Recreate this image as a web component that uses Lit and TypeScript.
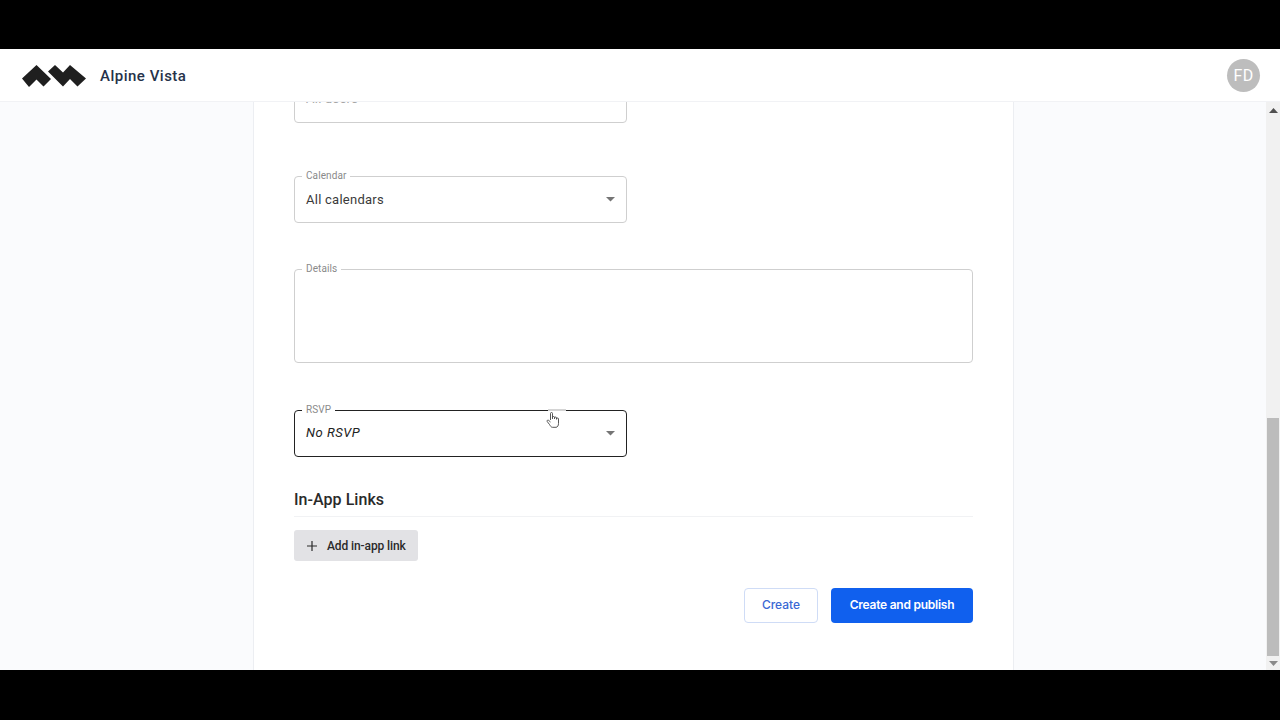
import { LitElement, html, css, svg } from "lit";
import { customElement } from "lit/decorators.js";

const arrow = svg`<svg class="arrow" width="9" height="5" viewBox="0 0 9 5"><path d="M0 0h9L4.500 4.500z" fill="#757575"/></svg>`;

@customElement("app-root")
export class AppRoot extends LitElement {
  static styles = css`
    :host { display: block; width: 1280px; height: 720px; background: #000; font-family: Roboto, "Liberation Sans", sans-serif; overflow: hidden; }
    .page { display: flex; flex-direction: column; height: 720px; }
    .bar-top { height: 49px; flex: none; background: #000; }
    .bar-bottom { height: 50px; flex: none; background: #000; }
    .header { height: 53px; flex: none; box-sizing: border-box; background: #fff; border-bottom: 1px solid #f1f2f5; display: flex; align-items: center; padding: 2px 20px 0 22px; position: relative; z-index: 2; }
    .logo { display: block; margin-top: 0; }
    .brand { margin-left: 14px; font-size: 15px; font-weight: 500; color: #26324a; letter-spacing: 0.5px; flex: 1; }
    .avatar { width: 33px; height: 33px; border-radius: 50%; background: #bdbdbd; color: #fff; font-size: 16px; display: flex; align-items: center; justify-content: center; letter-spacing: 0.3px; margin-top: -2px; }
    .body { flex: 1; min-height: 0; display: flex; background: #fafbfd; overflow: hidden; }
    .main { flex: 1; display: flex; justify-content: flex-start; padding-left: 253px; overflow: hidden; }
    .card { width: 761px; box-sizing: border-box; background: #fff; border-left: 1px solid #eceef2; border-right: 1px solid #eceef2; padding: 0 40px; margin-top: -26px; height: 620px; }
    .field { position: relative; box-sizing: border-box; width: 333px; height: 47px; background: #fff; border: 1px solid #cfcfcf; border-radius: 4px; display: flex; align-items: center; justify-content: space-between; padding: 0 11px 1px 11px; font-size: 13px; color: #3a3a3a; letter-spacing: 0.25px; }
    .first { margin-bottom: 53px; color: #a5a5a5; padding-bottom: 2px; }
    .calendar { margin-bottom: 46px; }
    .details { width: 679px; height: 94px; margin-bottom: 47px; }
    .rsvp { border-color: #222; }
    .rsvp-value { font-style: italic; color: #222; font-size: 13px; letter-spacing: 0.5px; margin-top: -2px; }
    .label { position: absolute; top: -7px; left: 7px; padding: 0 4px; background: #fff; font-size: 10px; line-height: 12px; color: #8a8a8a; letter-spacing: 0.1px; }
    .arrow { display: block; margin-right: 0; }
    .ghost { position: absolute; left: 253px; top: -2px; width: 18px; height: 2px; background: #d4d4d4; }
    .cursor { position: absolute; left: 251px; top: 0; }
    .section { margin-top: 33px; padding-bottom: 7px; border-bottom: 1px solid #f1f2f4; font-size: 16px; line-height: 19px; font-weight: 500; color: #2a2a2a; width: 679px; letter-spacing: 0.05px; }
    .add { display: inline-flex; align-items: center; gap: 10px; box-sizing: border-box; margin-top: 13px; height: 31px; width: 124px; padding: 0 0 0 13px; background: #e2e2e5; border: 0; border-radius: 3px; color: #2a2a2a; font: 500 12px Roboto, sans-serif; letter-spacing: -0.1px; white-space: nowrap; }
    .actions { display: flex; justify-content: flex-end; gap: 13px; margin-top: 27px; width: 679px; }
    .btn { box-sizing: border-box; height: 35px; padding-bottom: 2px; border-radius: 4px; font: 500 12px Inter, Roboto, sans-serif; display: flex; align-items: center; justify-content: center; }
    .outline { width: 74px; background: #fff; border: 1px solid #cfdcf6; color: #3a68d4; }
    .primary { width: 142px; background: #1060ee; border: 0; color: #fff; font-weight: 600; letter-spacing: -0.25px; }
    .scroll { width: 14px; flex: none; background: #f1f1f1; display: flex; flex-direction: column; align-items: center; }
    .scroll-up { height: 16px; flex: none; display: flex; align-items: center; justify-content: center; margin-bottom: 300px; }
    .thumb { width: 12px; height: 238px; flex: none; background: #bcbcbc; }
    .scroll-down { height: 14px; flex: none; display: flex; align-items: center; justify-content: center; }
  `;

  render() {
    return html`
      <div class="page">
        <div class="bar-top"></div>
        <header class="header">
          <svg class="logo" width="64" height="22" viewBox="22 65 64 22">
            <path fill="#1f1f1f" d="M36.500 65 51 79l-7.500 7.500-7-7-7.500 7.500L22 78.500z"/>
            <path fill="#1f1f1f" d="M48 71.500 55 65l8 7.500L70 65l16 13.500-8.500 8-7.500-7.500-7 7.500z"/>
          </svg>
          <div class="brand">Alpine Vista</div>
          <div class="avatar">FD</div>
        </header>
        <div class="body">
          <main class="main">
            <section class="card">
              <div class="field first">All users</div>
              <div class="field calendar">
                <span class="label">Calendar</span>
                <span>All calendars</span>
                ${arrow}
              </div>
              <div class="field details"><span class="label">Details</span></div>
              <div class="field rsvp">
                <span class="label">RSVP</span>
                <span class="rsvp-value">No RSVP</span>
                ${arrow}
                <span class="ghost"></span>
                <svg class="cursor" width="14" height="18" viewBox="0 0 14 18">
                  <path d="M4.500 9V2.500a1 1 0 0 1 2 0V8m0-1.500a1 1 0 0 1 2 0V8m0-1a1 1 0 0 1 2 0v1.500m0-.5a1 1 0 0 1 2 0v4.500c0 2-1 3.800-2.500 3.800H6.500c-1.500 0-2-1.300-3-2.800L1.200 10.500c-.6-1 .7-1.900 1.500-1.100L4.500 11" fill="#fff" stroke="#444" stroke-width="0.900" stroke-linejoin="round"/>
                </svg>
              </div>
              <div class="section">In-App Links</div>
              <button class="add">
                <svg width="10" height="10" viewBox="0 0 10 10"><path d="M5 0v10M0 5h10" stroke="#2a2a2a" stroke-width="1.200" fill="none"/></svg>
                <span>Add in-app link</span>
              </button>
              <div class="actions">
                <div class="btn outline">Create</div>
                <div class="btn primary">Create and publish</div>
              </div>
            </section>
          </main>
          <aside class="scroll">
            <div class="scroll-up"><svg width="9" height="5" viewBox="0 0 9 5"><path d="M0 5h9L4.500 0z" fill="#505050"/></svg></div>
            <div class="thumb"></div>
            <div class="scroll-down"><svg width="9" height="5" viewBox="0 0 9 5"><path d="M0 0h9L4.500 5z" fill="#8a8a8a"/></svg></div>
          </aside>
        </div>
        <div class="bar-bottom"></div>
      </div>
    `;
  }
}
